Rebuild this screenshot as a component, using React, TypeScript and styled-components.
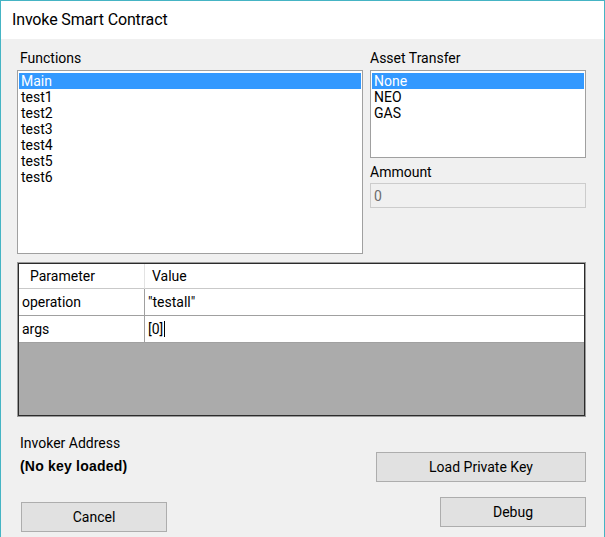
import React from "react";
import styled, { createGlobalStyle } from "styled-components";

const Global = createGlobalStyle`
  html, body { margin: 0; padding: 0; background: #ffffff; }
  * { box-sizing: border-box; }
  body { font-family: Roboto, "Liberation Sans", sans-serif; }
`;

const Window = styled.div`
  width: 605px;
  height: 537px;
  border: 1px solid #45b4c4;
  border-bottom: none;
  display: flex;
  flex-direction: column;
  overflow: hidden;
`;

const TitleBar = styled.div`
  height: 38px;
  background: #ffffff;
  display: flex;
  align-items: center;
  padding-left: 11px;
  padding-bottom: 1px;
  font-size: 16px;
  letter-spacing: -0.15px;
  color: #000;
`;

const Body = styled.div`
  flex: 1;
  background: #f0f0f0;
  padding: 11px 18px 0 16px;
  display: flex;
  flex-direction: column;
  font-size: 14px;
  color: #000;
`;

const TopSection = styled.div`
  display: grid;
  grid-template-columns: 346px 216px;
  column-gap: 7px;
`;

const Column = styled.div`
  display: flex;
  flex-direction: column;
`;

const Label = styled.div<{ $top?: number; $pad?: number }>`
  height: 16px;
  line-height: 16px;
  padding-left: ${(p) => p.$pad ?? 3}px;
  margin-top: ${(p) => p.$top ?? 0}px;
  white-space: nowrap;
`;

const ListBox = styled.div<{ $h: number }>`
  margin-top: 4px;
  height: ${(p) => p.$h}px;
  background: #fff;
  border: 1px solid #a0a0a0;
  box-shadow: inset 0 0 0 1px #ffffff;
  padding: 2px 1px;
`;

const ListItem = styled.div<{ $selected?: boolean }>`
  height: 16px;
  line-height: 16px;
  padding-left: 2px;
  background: ${(p) => (p.$selected ? "#3399ff" : "transparent")};
  color: ${(p) => (p.$selected ? "#ffffff" : "#000000")};
  white-space: nowrap;
`;

const TextBox = styled.div`
  margin-top: 3px;
  height: 25px;
  border: 1px solid #cccccc;
  background: #f0f0f0;
  color: #6d6d6d;
  display: flex;
  align-items: center;
  padding-left: 3px;
`;

const Grid = styled.div`
  margin-top: 8px;
  height: 155px;
  border: 1px solid #9a9a9a;
  box-shadow: inset 0 0 0 1px #2b2b2b;
  padding: 1px;
  background: #ababab;
  display: grid;
  grid-template-columns: 126px 1fr;
  grid-auto-rows: min-content;
  align-content: start;
`;

const HeaderCell = styled.div<{ $pad: number; $divider?: boolean }>`
  height: 25px;
  background: #ffffff;
  border-bottom: 1px solid #c9c9c9;
  border-right: ${(p) => (p.$divider ? "1px solid #e3e3e3" : "none")};
  padding-left: ${(p) => p.$pad}px;
  display: flex;
  align-items: center;
  padding-bottom: 1px;
`;

const Cell = styled.div<{ $pad: number; $divider?: boolean }>`
  height: 27px;
  background: #ffffff;
  border-bottom: 1px solid #a0a0a0;
  border-right: ${(p) => (p.$divider ? "1px solid #a0a0a0" : "none")};
  padding-left: ${(p) => p.$pad}px;
  display: flex;
  align-items: center;
  padding-bottom: 1px;
  white-space: nowrap;
`;

const Caret = styled.span`
  display: inline-block;
  width: 1px;
  height: 16px;
  background: #000;
  margin-left: 1px;
`;

const BottomRow = styled.div<{ $top: number }>`
  display: flex;
  justify-content: space-between;
  align-items: flex-start;
  margin-top: ${(p) => p.$top}px;
`;

const InvokerInfo = styled.div`
  display: flex;
  flex-direction: column;
  gap: 7px;
`;

const BoldText = styled.div`
  font-family: "Liberation Sans", Roboto, sans-serif;
  font-weight: bold;
  font-size: 14px;
  letter-spacing: 0.2px;
  height: 16px;
  line-height: 16px;
  padding-left: 3px;
  white-space: nowrap;
`;

const Button = styled.button<{ $w: number; $top?: number; $left?: number }>`
  width: ${(p) => p.$w}px;
  height: 30px;
  margin-top: ${(p) => p.$top ?? 0}px;
  margin-left: ${(p) => p.$left ?? 0}px;
  background: #e1e1e1;
  border: 1px solid #adadad;
  font-family: Roboto, "Liberation Sans", sans-serif;
  font-size: 14px;
  color: #000;
  padding: 0 0 1px 0;
`;

const functions = ["Main", "test1", "test2", "test3", "test4", "test5", "test6"];
const assets = ["None", "NEO", "GAS"];

export default function App() {
  return (
    <>
      <Global />
      <Window>
        <TitleBar>Invoke Smart Contract</TitleBar>
        <Body>
          <TopSection>
            <Column>
              <Label>Functions</Label>
              <ListBox $h={184}>
                {functions.map((f, i) => (
                  <ListItem key={f} $selected={i === 0}>
                    {f}
                  </ListItem>
                ))}
              </ListBox>
            </Column>
            <Column>
              <Label $pad={0}>Asset Transfer</Label>
              <ListBox $h={88}>
                {assets.map((a, i) => (
                  <ListItem key={a} $selected={i === 0}>
                    {a}
                  </ListItem>
                ))}
              </ListBox>
              <Label $top={6} $pad={0}>
                Ammount
              </Label>
              <TextBox>0</TextBox>
            </Column>
          </TopSection>
          <Grid>
            <HeaderCell $pad={11} $divider>
              Parameter
            </HeaderCell>
            <HeaderCell $pad={7}>Value</HeaderCell>
            <Cell $pad={3} $divider>
              operation
            </Cell>
            <Cell $pad={3}>"testall"</Cell>
            <Cell $pad={3} $divider>
              args
            </Cell>
            <Cell $pad={3}>
              [0]
              <Caret />
            </Cell>
          </Grid>
          <BottomRow $top={18}>
            <InvokerInfo>
              <Label>Invoker Address</Label>
              <BoldText>(No key loaded)</BoldText>
            </InvokerInfo>
            <Button $w={210} $top={17}>
              Load Private Key
            </Button>
          </BottomRow>
          <BottomRow $top={15}>
            <Button $w={146} $top={5} $left={4}>
              Cancel
            </Button>
            <Button $w={146}>Debug</Button>
          </BottomRow>
        </Body>
      </Window>
    </>
  );
}
